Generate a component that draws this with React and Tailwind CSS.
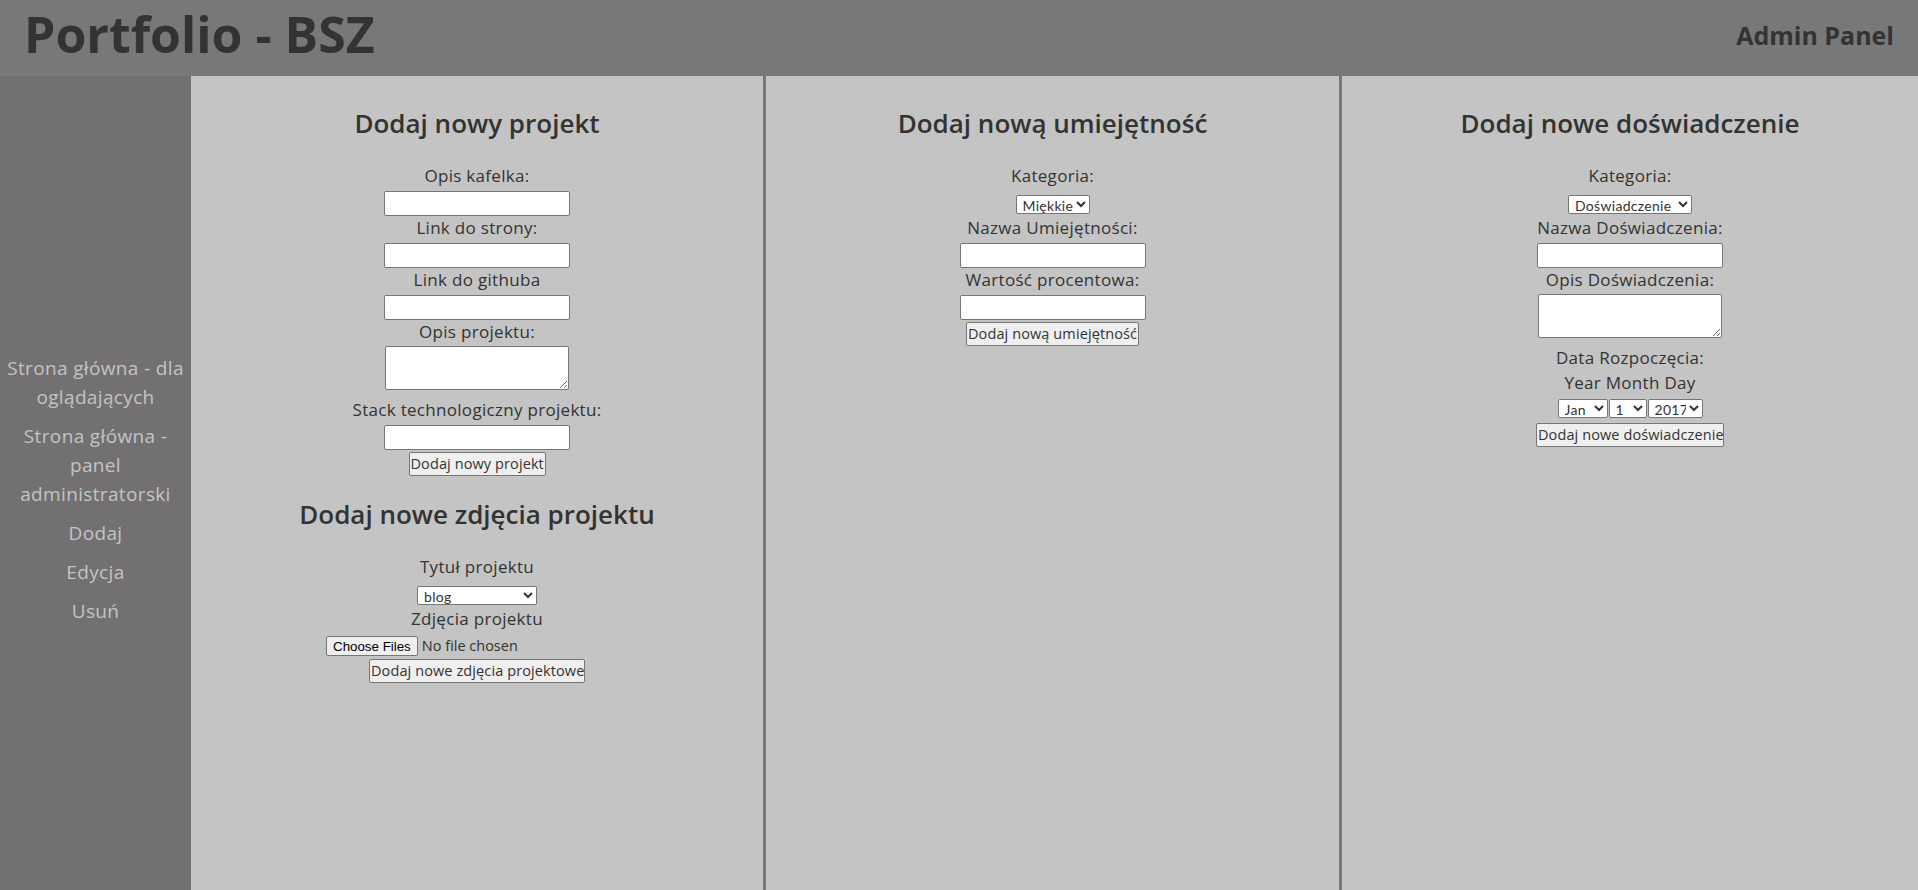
import React from "react";

const Label = ({ children, h = "h-[27px]" }) => (
  <div className={`${h} leading-[23px] text-[17px] tracking-[0.3px] whitespace-nowrap`}>{children}</div>
);

const TextInput = () => (
  <input type="text" className="block w-[186px] h-[25px] bg-white border border-[#767676] rounded-[2px]" />
);

const TextArea = () => (
  <textarea className="block w-[184px] h-[44px] mb-[8px] bg-white border border-[#767676] rounded-[2px]" />
);

const selectCls =
  "h-[19px] py-0 bg-white border border-[#767676] rounded-[2px] font-['Lato',sans-serif] text-[14px] tracking-[0.3px] pl-[2px]";

const Select = ({ options, w }) => (
  <div className="h-[25px] pt-[2px]">
    <select className={`${w} ${selectCls}`}>
      {options.map((o) => (
        <option key={o}>{o}</option>
      ))}
    </select>
  </div>
);

const Button = ({ label, w, className = "mt-[2px]" }) => (
  <button
    className={`${w} ${className} h-[24px] bg-[#efefef] border border-[#767676] rounded-[2px] text-[14.5px] tracking-[0.1px] px-[1px] whitespace-nowrap overflow-hidden`}
  >
    {label}
  </button>
);

const Heading = ({ children, className = "" }) => (
  <h2 className={`${className} text-[26px] leading-[32px] font-semibold mb-[25px] whitespace-nowrap`}>{children}</h2>
);

const NAV = [
  "Strona główna - dla oglądających",
  "Strona główna - panel administratorski",
  "Dodaj",
  "Edycja",
  "Usuń",
];

export default function App() {
  return (
    <div className="flex flex-col h-screen font-['Open_Sans',sans-serif] text-[#333333]">
      <header className="h-[76px] shrink-0 flex items-start justify-between px-[24px] bg-[#787878]">
        <h1 className="text-[50px] leading-[69px] font-bold">Portfolio - BSZ</h1>
        <span className="text-[25px] leading-[70px] font-bold">Admin Panel</span>
      </header>

      <div className="flex flex-1 min-h-0">
        <aside className="w-[191px] shrink-0 bg-[#727070] flex flex-col justify-center items-center gap-[10px] pt-[14px] px-[4px] text-center text-[#c4c4c4]">
          {NAV.map((item) => (
            <a key={item} href="#" className="block text-[19px] leading-[29px] tracking-[0.35px]">
              {item}
            </a>
          ))}
        </aside>

        <main className="flex-1 grid grid-cols-[572px_579px_1fr] bg-[#c4c4c4]">
          <section className="flex flex-col items-center pt-[31px] text-center">
            <Heading>Dodaj nowy projekt</Heading>
            <Label>Opis kafelka:</Label>
            <TextInput />
            <Label>Link do strony:</Label>
            <TextInput />
            <Label>Link do githuba</Label>
            <TextInput />
            <Label h="h-[26px]">Opis projektu:</Label>
            <TextArea />
            <Label>Stack technologiczny projektu:</Label>
            <TextInput />
            <Button label="Dodaj nowy projekt" w="w-[137px]" />

            <Heading className="mt-[22px]">Dodaj nowe zdjęcia projektu</Heading>
            <Label>Tytuł projektu</Label>
            <Select options={["blog"]} w="w-[120px]" />
            <Label>Zdjęcia projektu</Label>
            <input
              type="file"
              multiple
              className="block w-[302px] h-[21px] mt-[1px] text-[14.5px] text-left file:h-[20px] file:mr-[4px] file:px-[6px] file:bg-[#efefef] file:border file:border-[#767676] file:rounded-[2px] file:font-['Liberation_Sans'] file:text-[13.33px] file:text-black"
            />
            <Button label="Dodaj nowe zdjęcia projektowe" w="w-[216px]" className="mt-[3px]" />
          </section>

          <section className="flex flex-col items-center pt-[31px] text-center border-x-[3px] border-[#787878]">
            <Heading>Dodaj nową umiejętność</Heading>
            <Label>Kategoria:</Label>
            <Select options={["Miękkie", "Twarde"]} w="w-[74px]" />
            <Label>Nazwa Umiejętności:</Label>
            <TextInput />
            <Label>Wartość procentowa:</Label>
            <TextInput />
            <Button label="Dodaj nową umiejętność" w="w-[173px]" />
          </section>

          <section className="flex flex-col items-center pt-[31px] text-center">
            <Heading>Dodaj nowe doświadczenie</Heading>
            <Label>Kategoria:</Label>
            <Select options={["Doświadczenie", "Edukacja"]} w="w-[124px]" />
            <Label>Nazwa Doświadczenia:</Label>
            <TextInput />
            <Label h="h-[26px]">Opis Doświadczenia:</Label>
            <TextArea />
            <Label h="h-[25px]">Data Rozpoczęcia:</Label>
            <Label>Year Month Day</Label>
            <div className="flex gap-[1px] mt-[1px]">
              <select className={`w-[50px] ${selectCls}`}>
                <option>Jan</option>
                <option>Feb</option>
              </select>
              <select className={`w-[38px] ${selectCls}`}>
                <option>1</option>
                <option>2</option>
              </select>
              <select className={`w-[55px] ${selectCls}`}>
                <option>2017</option>
                <option>2018</option>
              </select>
            </div>
            <Button label="Dodaj nowe doświadczenie" w="w-[188px]" className="mt-[5px]" />
          </section>
        </main>
      </div>
    </div>
  );
}
